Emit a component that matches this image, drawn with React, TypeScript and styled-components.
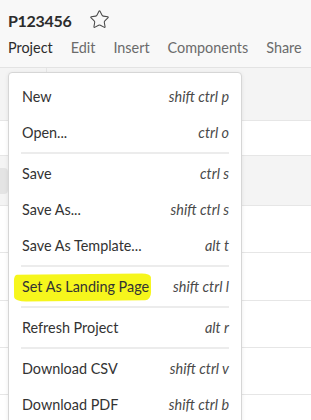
import React from "react";
import styled, { createGlobalStyle } from "styled-components";
import { Star } from "lucide-react";

const GlobalStyle = createGlobalStyle`
  html, body {
    margin: 0;
    padding: 0;
    background: #ffffff;
    font-family: Lato, "Open Sans", "Liberation Sans", sans-serif;
    color: #2c2c2c;
  }
`;

const Page = styled.div`
  position: relative;
  width: 311px;
  height: 420px;
  overflow: hidden;
  background: #ffffff;
`;

const Header = styled.header`
  height: 67px;
  padding: 0 8px;
  background: #f8f8f8;
  border-bottom: 1px solid #e3e3e3;
  display: flex;
  flex-direction: column;
`;

const TitleRow = styled.div`
  height: 40px;
  display: flex;
  align-items: center;
  gap: 18px;
`;

const Title = styled.h1`
  margin: 0;
  font-size: 16px;
  font-weight: 700;
  color: #2c2c2c;
  letter-spacing: -0.3px;
`;

const StarIcon = styled(Star)`
  color: #4a4a4a;
  margin-top: -1px;
`;

const Nav = styled.nav`
  display: flex;
  gap: 18px;
  height: 16px;
  line-height: 16px;
`;

const NavItem = styled.span<{ $active?: boolean }>`
  font-size: 14.4px;
  white-space: nowrap;
  color: ${(p) => (p.$active ? "#2c2c2c" : "#6b6b6b")};
`;

const Band = styled.div<{ $h: number; $tone?: boolean }>`
  height: ${(p) => p.$h}px;
  background: ${(p) => (p.$tone ? "#f4f4f4" : "#ffffff")};
  border-bottom: 1px solid #e6e6e6;
  display: flex;
`;

const SideCell = styled.div`
  width: 46px;
  border-right: 1px solid #e6e6e6;
`;

const Tab = styled.div`
  position: absolute;
  left: -4px;
  top: 168px;
  width: 12px;
  height: 26px;
  border-radius: 4px;
  background: #e4e4e4;
`;

const Menu = styled.div`
  position: absolute;
  left: 8px;
  top: 72px;
  width: 232px;
  padding-top: 5px;
  padding-bottom: 20px;
  background: #ffffff;
  border: 1px solid #d6d6d6;
  border-radius: 4px;
  box-shadow: 0 1px 4px rgba(0, 0, 0, 0.08);
`;

const Item = styled.div`
  height: 36px;
  display: flex;
  align-items: center;
  justify-content: space-between;
  padding: 0 12px 0 13px;
  font-size: 14.4px;
  color: #333333;
`;

const Shortcut = styled.span`
  font-style: italic;
  color: #4a4a4a;
  font-size: 14.4px;
`;

const Divider = styled.div`
  height: 2px;
  margin: 1.5px 12px 1.5px 12px;
  background: #ececec;
`;

const Highlight = styled.span`
  position: relative;
  z-index: 0;
  &::before {
    content: "";
    position: absolute;
    z-index: -1;
    left: -8px;
    right: -2px;
    top: -4px;
    bottom: -6px;
    background: #f6f61c;
    border-radius: 3px 9px 6px 12px / 6px 4px 8px 5px;
    transform: rotate(-0.6deg);
  }
`;

type Entry = { label: string; keys: string; mark?: boolean } | "div";

const entries: Entry[] = [
  { label: "New", keys: "shift ctrl p" },
  { label: "Open...", keys: "ctrl o" },
  "div",
  { label: "Save", keys: "ctrl s" },
  { label: "Save As...", keys: "shift ctrl s" },
  { label: "Save As Template...", keys: "alt t" },
  "div",
  { label: "Set As Landing Page", keys: "shift ctrl l", mark: true },
  "div",
  { label: "Refresh Project", keys: "alt r" },
  "div",
  { label: "Download CSV", keys: "shift ctrl v" },
  { label: "Download PDF", keys: "shift ctrl b" },
];

const navItems = ["Project", "Edit", "Insert", "Components", "Share"];

export default function App() {
  return (
    <Page>
      <GlobalStyle />
      <Header>
        <TitleRow>
          <Title>P123456</Title>
          <StarIcon size={21} strokeWidth={1.2} />
        </TitleRow>
        <Nav>
          {navItems.map((n, i) => (
            <NavItem key={n} $active={i === 0}>
              {n}
            </NavItem>
          ))}
        </Nav>
      </Header>
      <Band $h={52} $tone>
        <SideCell />
      </Band>
      <Band $h={34} />
      <Band $h={49} $tone />
      <Band $h={46} />
      <Band $h={47} />
      <Band $h={46} />
      <Band $h={46} />
      <Band $h={46} />
      <Tab />
      <Menu>
        {entries.map((e, i) =>
          e === "div" ? (
            <Divider key={i} />
          ) : (
            <Item key={i}>
              {e.mark ? <Highlight>{e.label}</Highlight> : <span>{e.label}</span>}
              <Shortcut>{e.keys}</Shortcut>
            </Item>
          )
        )}
      </Menu>
    </Page>
  );
}
